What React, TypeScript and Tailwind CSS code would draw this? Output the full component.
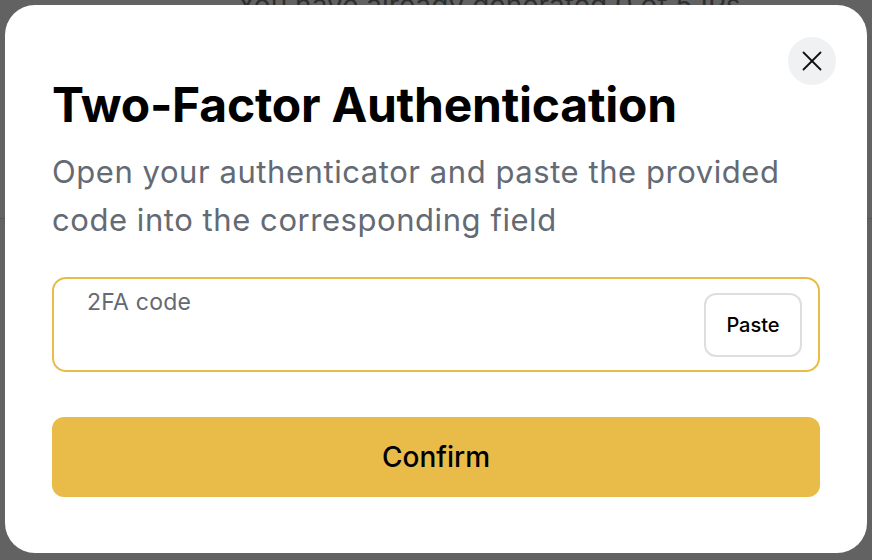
import React, { useState } from 'react';
import { X } from 'lucide-react';

const TwoFactorModal: React.FC<{ onClose: () => void }> = ({ onClose }) => {
  const [code, setCode] = useState('');

  const handlePaste = async () => {
    try {
      const text = await navigator.clipboard.readText();
      setCode(text.trim());
    } catch (err) {
      console.error('Clipboard not available', err);
    }
  };

  return (
    <div className="fixed inset-0 z-50 p-[5px]">
      <div className="relative h-[548px] w-[862px] bg-white rounded-[30px] px-[47px] pt-[72px]">
        <button
          onClick={onClose}
          className="absolute top-[32px] right-[31px] w-[48px] h-[48px] rounded-full bg-[#f0f1f3] flex items-center justify-center text-[#111]"
        >
          <X size={34} strokeWidth={1.3} />
        </button>

        <h2 className="text-[48px] leading-[56px] font-bold text-black tracking-[-0.005em]">
          Two-Factor Authentication
        </h2>
        <p className="mt-[15px] text-[31px] leading-[48px] text-[#646a73] tracking-[0.018em]">
          Open your authenticator and paste the provided code into the corresponding field
        </p>

        <div className="mt-[33px] h-[95px] border-2 border-[#e9bc4a] rounded-[14px] flex items-center pl-[33px] pr-[16px]">
          <div className="flex-1 self-stretch flex flex-col pt-[8px]">
            <label className="text-[23px] leading-[30px] text-[#646a73] tracking-[0.01em]">2FA code</label>
            <input
              value={code}
              onChange={(e) => setCode(e.target.value)}
              className="bg-transparent outline-none text-[22px] text-black"
            />
          </div>
          <button
            onClick={handlePaste}
            className="w-[98px] h-[64px] rounded-[12px] border-2 border-[#dcdee2] text-[20px] font-medium text-black"
          >
            Paste
          </button>
        </div>

        <button className="mt-[45px] w-full h-[80px] rounded-[12px] bg-[#e9bc4a] text-[28px] font-medium text-black">
          Confirm
        </button>
      </div>
    </div>
  );
};

export default function App() {
  const [open, setOpen] = useState(true);

  return (
    <div className="relative h-[560px] w-[872px] overflow-hidden bg-[#626262]" style={{ fontFamily: 'Inter, "Noto Sans", sans-serif' }}>
      <div className="-mt-[15px] pl-[237px] text-[28px] leading-[40px] text-[#2f2f2f]">
        You have already generated 0 of 5 IPs
      </div>
      <div className="mt-[193px] border-t border-[#555]" />
      {open && <TwoFactorModal onClose={() => setOpen(false)} />}
    </div>
  );
}
